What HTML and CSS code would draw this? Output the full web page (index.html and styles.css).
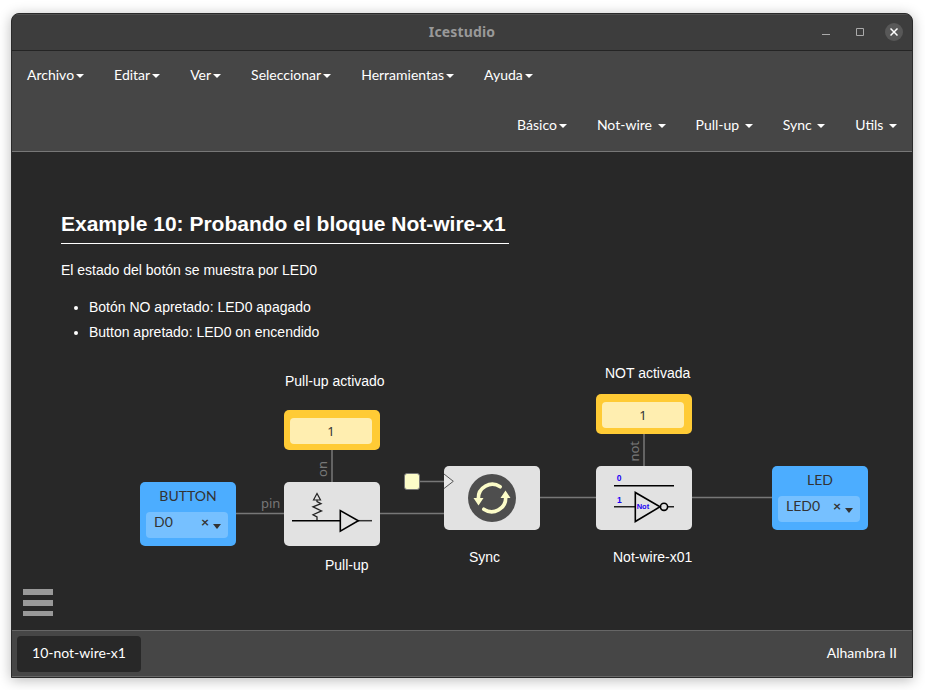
FILE: index.html
```html
<!DOCTYPE html>
<html lang="es">
<head>
<meta charset="utf-8">
<title>Icestudio</title>
<link rel="stylesheet" href="styles.css">
</head>
<body>
<div class="window">
  <header class="titlebar">
    <span class="title">Icestudio</span>
    <div class="controls">
      <svg class="minimize" width="8" height="8"><path d="M0 6.5h8"/></svg>
      <svg class="maximize" width="8" height="8"><path d="M.5.5h7v7h-7z"/></svg>
      <span class="close"><svg width="8" height="8"><path d="M.5.5l7 7M7.5.5l-7 7"/></svg></span>
    </div>
  </header>
  <nav class="menubar">
    <div class="menu">
      <a>Archivo<i class="caret"></i></a><a>Editar<i class="caret"></i></a><a>Ver<i class="caret"></i></a><a>Seleccionar<i class="caret"></i></a><a>Herramientas<i class="caret"></i></a><a>Ayuda<i class="caret"></i></a>
    </div>
    <div class="menu menu-right">
      <a>Básico<i class="caret"></i></a><a>Not-wire <i class="caret"></i></a><a>Pull-up <i class="caret"></i></a><a>Sync <i class="caret"></i></a><a>Utils <i class="caret"></i></a>
    </div>
  </nav>
  <main class="canvas">
    <section class="notes">
      <h1>Example 10: Probando el bloque Not-wire-x1</h1>
      <p>El estado del botón se muestra por LED0</p>
      <ul>
        <li>Botón NO apretado: LED0 apagado</li>
        <li>Button apretado: LED0 on encendido</li>
      </ul>
    </section>

    <svg class="wires" width="900" height="478" viewBox="12 152 900 478">
      <path d="M236 513.5h48M380 513.5h64M420 481.5h24M540 497.5h56M692 497.5h80M332 450v32M644 434v32"/>
    </svg>
    <span class="port port-pin">pin</span>
    <span class="port port-on">on</span>
    <span class="port port-not">not</span>

    <span class="label label-pullup-on">Pull-up activado</span>
    <span class="label label-not-on">NOT activada</span>
    <span class="label label-pullup">Pull-up</span>
    <span class="label label-sync">Sync</span>
    <span class="label label-not">Not-wire-x01</span>

    <div class="constant const-pullup"><span>1</span></div>
    <div class="constant const-not"><span>1</span></div>

    <div class="io io-button">
      <div class="io-name">BUTTON</div>
      <div class="select"><span>D0</span><b>×</b><i></i></div>
    </div>
    <div class="io io-led">
      <div class="io-name">LED</div>
      <div class="select"><span>LED0</span><b>×</b><i></i></div>
    </div>

    <div class="block block-pullup">
      <svg width="96" height="64" fill="none" stroke="#000">
        <path d="M8 38.7h48" stroke-width="1.6"/>
        <path d="M74 38.7h14" stroke="#333" stroke-width="1.5"/>
        <path d="M56.3 28.5v20.6l18-10.4z" stroke-width="1.6"/>
        <path d="M33 38v-3l-4-2.3 8.5-3.8-8.5-4 8-3.2-4-2v-2" stroke="#222" stroke-width="1.3"/>
        <path d="M29.5 18l3.5-6.5 3.5 6.5z" stroke="#222" stroke-width="1.2"/>
      </svg>
    </div>
    <div class="block block-sync">
      <svg width="96" height="64">
        <path d="M0 8l9.3 7.3L0 22.5" fill="#e8e8e8" stroke="#555"/>
        <circle cx="48" cy="32" r="24" fill="#4e4e4e"/>
        <g fill="none" stroke="#fcfcc8" stroke-width="3.6" stroke-linecap="round">
          <path d="M56.2 20.8A14 14 0 0 0 34.3 33"/>
          <path d="M39.8 43.2A14 14 0 0 0 61.7 31"/>
        </g>
        <path d="M29.5 32h10l-5 7.5zM56.5 32h10l-5-7.5z" fill="#fcfcc8"/>
      </svg>
    </div>
    <div class="block block-not">
      <svg width="96" height="64">
        <g fill="none" stroke="#000" stroke-width="1.6">
          <path d="M18 19.7h60"/>
          <path d="M18 40.7h21M72 40.7h6" stroke="#222"/>
          <path d="M39.3 26.5v29L64 40.8z"/>
          <circle cx="68" cy="40.8" r="3.6"/>
        </g>
        <g class="gate-text">
          <text x="20.7" y="15">0</text>
          <text x="21" y="37">1</text>
          <text class="gate-name" x="40.7" y="43">Not</text>
        </g>
      </svg>
    </div>
    <div class="clock"></div>
    <div class="hamburger"><i></i><i></i><i></i></div>
  </main>
  <footer class="footer">
    <span class="tab">10-not-wire-x1</span>
    <span class="board">Alhambra II</span>
  </footer>
</div>
</body>
</html>
```
FILE: styles.css
```css
* { box-sizing: border-box; }
body {
  margin: 0;
  padding: 13px 12px 12px 11px;
  height: 690px;
  overflow: hidden;
  background: #fff;
  color: #fff;
  font: 14px/20px Lato, sans-serif;
}
.window {
  width: 902px;
  height: 665px;
  display: flex;
  flex-direction: column;
  border: 1px solid #2a2a2a;
  border-radius: 8px 8px 0 0;
  background: #282828;
  box-shadow: 0 2px 13px rgba(0, 0, 0, .28);
  overflow: hidden;
}
.titlebar {
  height: 37px;
  flex: none;
  display: grid;
  grid-template-columns: 1fr auto 1fr;
  align-items: center;
  padding-bottom: 2px;
  border-top: 1px solid #505050;
  border-bottom: 1px solid #242424;
  background: #3d3d3d;
}
.title {
  grid-column: 2;
  padding-top: 1px;
  color: #999;
  font: bold 14px/20px "Noto Sans", sans-serif;
  letter-spacing: .15px;
}
.controls {
  display: flex;
  justify-content: flex-end;
  align-items: center;
  padding-right: 9px;
}
.controls svg { display: block; fill: none; stroke: #aaa; }
.minimize { margin-right: 26px; }
.maximize { margin-right: 21px; }
.close {
  width: 18px;
  height: 18px;
  display: grid;
  place-items: center;
  border-radius: 50%;
  background: #585858;
}
.close svg { stroke: #fff; stroke-width: 1.5; }
.menubar {
  height: 101px;
  flex: none;
  background: #464646;
  border-bottom: 1px solid #777;
}
.menu { display: flex; height: 50px; }
.menu-right { justify-content: flex-end; }
.menu a { padding: 14px 15px; white-space: pre; }
.caret {
  display: inline-block;
  margin-left: 2px;
  vertical-align: middle;
  border: 4px solid transparent;
  border-top-color: #fff;
  border-bottom: 0;
}
.canvas {
  position: relative;
  height: 478px;
  flex: none;
  background: #282828;
  font-family: "Liberation Sans", sans-serif;
}
.notes { padding: 57px 0 0 49px; }
.notes h1 {
  width: 448px;
  height: 35px;
  margin: 0;
  border-bottom: 1px solid #fff;
  font-size: 21px;
  line-height: 30px;
  white-space: nowrap;
}
.notes p { margin: 14px 0 0; line-height: 25px; }
.notes ul { margin: 12px 0 0; padding-left: 28px; line-height: 25px; }
.wires { position: absolute; left: 0; top: 0; fill: none; stroke: #777; stroke-width: 1.5; }
.port {
  position: absolute;
  color: #777;
  font: 13px/16px "Noto Sans", sans-serif;
}
.port-pin { left: 249px; top: 343px; }
.port-on { left: 302px; top: 309px; writing-mode: vertical-rl; transform: rotate(180deg); }
.port-not { left: 614px; top: 289px; writing-mode: vertical-rl; transform: rotate(180deg); }
.label { position: absolute; white-space: nowrap; }
.label-pullup-on { left: 273px; top: 219px; }
.label-not-on { left: 593px; top: 211px; }
.label-pullup { left: 313px; top: 403px; }
.label-sync { left: 457px; top: 395px; }
.label-not { left: 601px; top: 395px; }
.constant {
  position: absolute;
  width: 96px;
  height: 40px;
  padding: 8px 8px 6px 6px;
  border-radius: 5px;
  background: #ffcb35;
}
.constant span {
  display: block;
  height: 26px;
  border-radius: 4px;
  background: #ffeeb0;
  color: #333;
  font: 13px/26px "Noto Sans", sans-serif;
  text-align: center;
}
.const-pullup { left: 272px; top: 258px; }
.const-not { left: 584px; top: 242px; }
.io {
  position: absolute;
  width: 96px;
  height: 64px;
  padding: 4px 8px 8px 6px;
  border-radius: 5px;
  background: #4cadff;
  color: #333;
  font-family: Lato, sans-serif;
}
.io-button { left: 128px; top: 330px; }
.io-led { left: 760px; top: 314px; }
.io-name { height: 26px; padding-left: 2px; text-align: center; }
.select {
  display: flex;
  height: 26px;
  padding: 0 7px 0 8px;
  border-radius: 4px;
  background: #76c0ff;
  line-height: 19px;
}
.select span { flex: 1; }
.select b { font-size: 14px; line-height: 19px; }
.select i {
  margin: 12px 0 0 4px;
  width: 8px;
  height: 5px;
  border: 4px solid transparent;
  border-top: 5px solid #333;
  border-bottom: 0;
}
.block {
  position: absolute;
  width: 96px;
  height: 64px;
  border-radius: 5px;
  background: #e2e2e2;
}
.block svg { display: block; }
.block-pullup { left: 272px; top: 330px; }
.block-sync { left: 432px; top: 314px; }
.block-not { left: 584px; top: 314px; }
.gate-text { fill: #1c00f5; font: bold 8.5px "Liberation Sans", sans-serif; }
.gate-name { font: bold 7.5px "Liberation Sans", sans-serif; }
.clock {
  position: absolute;
  left: 392px;
  top: 321px;
  width: 16px;
  height: 17px;
  border: 1px solid #777;
  border-radius: 3px;
  background: #fcfcc8;
}
.hamburger {
  position: absolute;
  left: 11px;
  top: 437px;
  width: 30px;
  display: grid;
  gap: 5px;
}
.hamburger i { height: 6px; background: #999; }
.hamburger i:last-child { height: 5px; }
.footer {
  height: 47px;
  flex: none;
  display: flex;
  justify-content: space-between;
  align-items: center;
  padding: 0 15px 0 5px;
  border-top: 1px solid #666;
  border-bottom: 1px solid #666;
  background: #464646;
}
.board { padding-bottom: 2px; }
.tab {
  width: 124px;
  height: 36px;
  border-radius: 4px;
  background: #282828;
  line-height: 33px;
  text-align: center;
}
```
